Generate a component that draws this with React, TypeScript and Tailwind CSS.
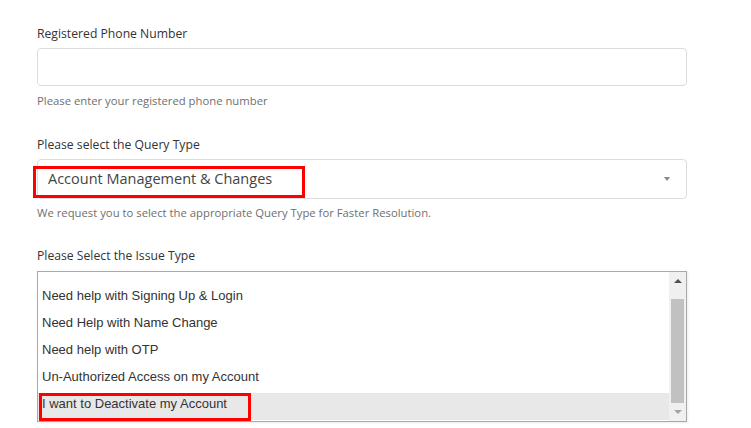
import { useState } from "react";

const issueTypes = [
  "Need help with Signing Up & Login",
  "Need Help with Name Change",
  "Need help with OTP",
  "Un-Authorized Access on my Account",
  "I want to Deactivate my Account",
];

const App = () => {
  const [selected, setSelected] = useState(issueTypes[4]);

  return (
    <div className="min-h-[428px] w-[751px] bg-white pl-[37px] pt-[25px] font-['Open_Sans',sans-serif] text-[#333]">
      <div className="w-[650px]">
        <label className="block h-[18px] text-[12.2px] leading-[18px]">
          Registered Phone Number
        </label>
        <input
          type="text"
          className="mt-[5px] block h-[38px] w-full rounded-[4px] border border-[#dcdcdc] px-3 outline-none"
        />
        <p className="mt-[6px] h-[17px] text-[11.3px] leading-[17px] text-[#6f6f6f]">
          Please enter your registered phone number
        </p>

        <label className="mt-[27px] block h-[18px] text-[12.2px] leading-[18px]">
          Please select the Query Type
        </label>
        <div className="relative mt-[5px] flex h-[40px] w-full items-center justify-between rounded-[4px] border border-[#dcdcdc] pl-[10px] pr-[16px]">
          <span className="text-[14.5px] text-[#444]">Account Management &amp; Changes</span>
          <span className="h-0 w-0 border-x-[3.5px] border-t-[4px] border-x-transparent border-t-[#888]" />
          <div className="absolute left-[-5px] top-[6px] h-[32px] w-[272px] border-[3px] border-[#ff0000]" />
        </div>
        <p className="mt-[5px] h-[17px] text-[11.3px] leading-[17px] text-[#6f6f6f]">
          We request you to select the appropriate Query Type for Faster Resolution.
        </p>

        <label className="mt-[26px] block h-[18px] text-[12.2px] leading-[18px]">
          Please Select the Issue Type
        </label>
        <div className="relative mt-[6px] flex h-[151px] w-full border border-[#a9a9a9] font-['Liberation_Sans',Arial,sans-serif] shadow-[1px_1px_2px_rgba(0,0,0,0.08)]">
          <ul className="flex flex-1 flex-col pt-[13px]">
            {issueTypes.map((item) => (
              <li
                key={item}
                onClick={() => setSelected(item)}
                className={
                  item === selected
                    ? "h-[27px] cursor-default bg-[#e8e8e8] pl-[4px] text-[13px] leading-[22px] text-[#333]"
                    : "h-[27px] cursor-default pl-[4px] text-[13px] leading-[22px] text-[#333]"
                }
              >
                {item}
              </li>
            ))}
          </ul>
          <div className="flex w-[17px] flex-col bg-[#f0f0f0]">
            <div className="flex h-[17px] items-center justify-center">
              <span className="h-0 w-0 border-x-[4px] border-b-[4px] border-x-transparent border-b-[#505050]" />
            </div>
            <div className="mx-[2px] mt-[10px] h-[104px] bg-[#c1c1c1]" />
            <div className="flex flex-1 items-center justify-center">
              <span className="h-0 w-0 border-x-[4px] border-t-[4px] border-x-transparent border-t-[#a3a3a3]" />
            </div>
          </div>
          <div className="absolute left-[1px] top-[121px] h-[28px] w-[212px] border-[3px] border-[#ff0000]" />
        </div>
      </div>
    </div>
  );
};

export default App;
